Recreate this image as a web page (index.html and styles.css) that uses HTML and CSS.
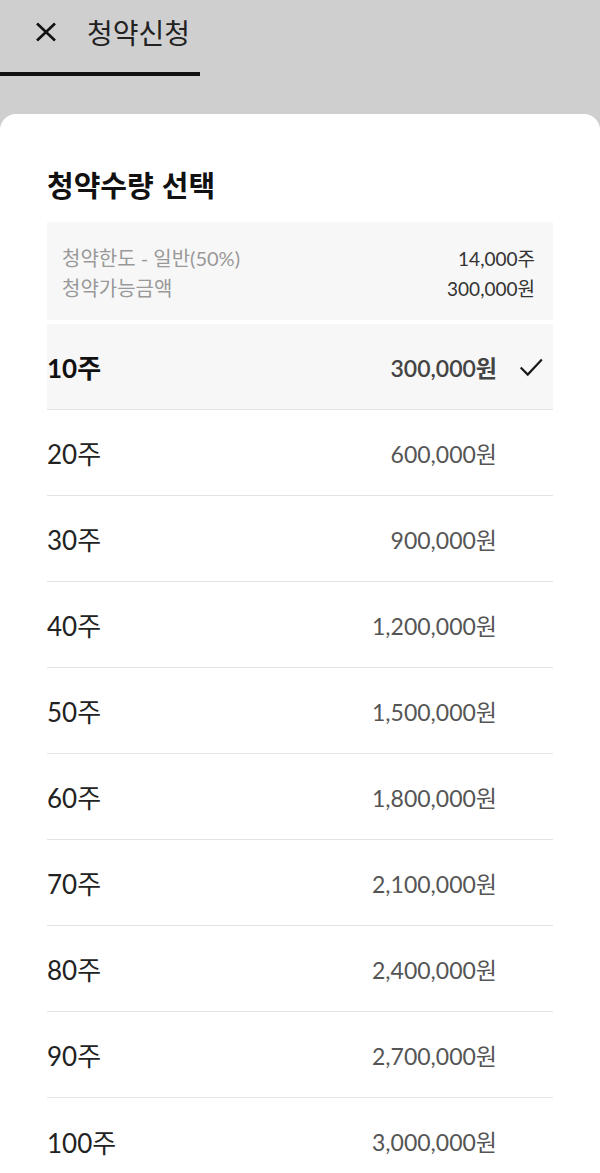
FILE: index.html
```html
<!DOCTYPE html>
<html lang="ko">
<head>
  <meta charset="utf-8">
  <meta name="viewport" content="width=device-width">
  <title>청약신청</title>
  <link rel="stylesheet" href="styles.css">
</head>
<body>
  <div class="topbar">
    <div class="topbar-title">
      <svg class="close-icon" viewBox="0 0 22 20" width="22" height="20">
        <path d="M2 1.5 L20 18.5 M20 1.5 L2 18.5" stroke="#111" stroke-width="2.6" fill="none"/>
      </svg>
      <span>청약신청</span>
    </div>
    <div class="tab-line"></div>
  </div>

  <div class="sheet">
    <h2 class="sheet-title">청약수량 선택</h2>

    <div class="limit-box">
      <div class="limit-row">
        <span class="limit-label">청약한도 - 일반(50%)</span>
        <span class="limit-value">14,000주</span>
      </div>
      <div class="limit-row">
        <span class="limit-label">청약가능금액</span>
        <span class="limit-value">300,000원</span>
      </div>
    </div>

    <ul class="qty-list">
      <li class="qty-item selected">
        <span class="qty">10주</span>
        <span class="amount">300,000원</span>
        <span class="check">
          <svg viewBox="0 0 24 24" width="26" height="26">
            <path d="M2.5 12.5 L9 19 L22 5" stroke="#1a1a1a" stroke-width="2" fill="none"/>
          </svg>
        </span>
      </li>
      <li class="qty-item"><span class="qty">20주</span><span class="amount">600,000원</span><span class="check"></span></li>
      <li class="qty-item"><span class="qty">30주</span><span class="amount">900,000원</span><span class="check"></span></li>
      <li class="qty-item"><span class="qty">40주</span><span class="amount">1,200,000원</span><span class="check"></span></li>
      <li class="qty-item"><span class="qty">50주</span><span class="amount">1,500,000원</span><span class="check"></span></li>
      <li class="qty-item"><span class="qty">60주</span><span class="amount">1,800,000원</span><span class="check"></span></li>
      <li class="qty-item"><span class="qty">70주</span><span class="amount">2,100,000원</span><span class="check"></span></li>
      <li class="qty-item"><span class="qty">80주</span><span class="amount">2,400,000원</span><span class="check"></span></li>
      <li class="qty-item"><span class="qty">90주</span><span class="amount">2,700,000원</span><span class="check"></span></li>
      <li class="qty-item"><span class="qty">100주</span><span class="amount">3,000,000원</span><span class="check"></span></li>
    </ul>
  </div>
</body>
</html>
```

FILE: styles.css
```css
*{
  box-sizing:border-box;
}
body{
  margin:0;
  background-color:#cfcfcf;
  font-family: Lato, "Noto Sans CJK KR", sans-serif;
  color:#222;
  overflow:hidden;
}
.topbar{
  height:114px;
  display:flex;
  flex-direction:column;
}
.topbar-title{
  display:flex;
  align-items:center;
  height:63px;
  padding-left:35px;
  font-family:"Noto Sans CJK KR", sans-serif;
  font-size:28px;
  color:#222;
}
.close-icon{
  margin-right:30px;
}
.tab-line{
  margin-top:9px;
  width:200px;
  height:4px;
  background-color:#111;
}
.sheet{
  background-color:#fff;
  border-radius:16px 16px 0 0;
  padding:0 47px;
  min-height:1059px;
}
.sheet-title{
  margin:0;
  padding-top:50px;
  height:108px;
  font-family:"Noto Sans CJK KR", sans-serif;
  font-size:29px;
  line-height:40px;
  font-weight:700;
  color:#111;
}
.limit-box{
  background-color:#f7f7f7;
  padding:20px 18px 18px 15px;
  height:98px;
}
.limit-row{
  display:flex;
  justify-content:space-between;
  align-items:center;
  height:30px;
  font-size:19px;
}
.limit-label{
  font-size:20px;
  color:#999;
}
.limit-value{
  color:#333;
}
.qty-list{
  list-style:none;
  margin:4px 0 0;
  padding:0;
}
.qty-item{
  display:flex;
  align-items:center;
  height:86px;
  border-bottom:1px solid #e3e3e3;
  color:#222;
}
.qty-item.selected{
  background-color:#f7f7f7;
}
.qty{
  flex:1;
  font-size:26px;
}
.selected .qty{
  font-weight:700;
  color:#111;
}
.amount{
  font-size:23px;
  color:#555;
}
.selected .amount{
  font-weight:600;
  color:#444;
}
.check{
  width:56px;
  display:flex;
  justify-content:flex-end;
  padding-right:9px;
}
.qty-item:last-child{
  border-bottom:none;
}
```
